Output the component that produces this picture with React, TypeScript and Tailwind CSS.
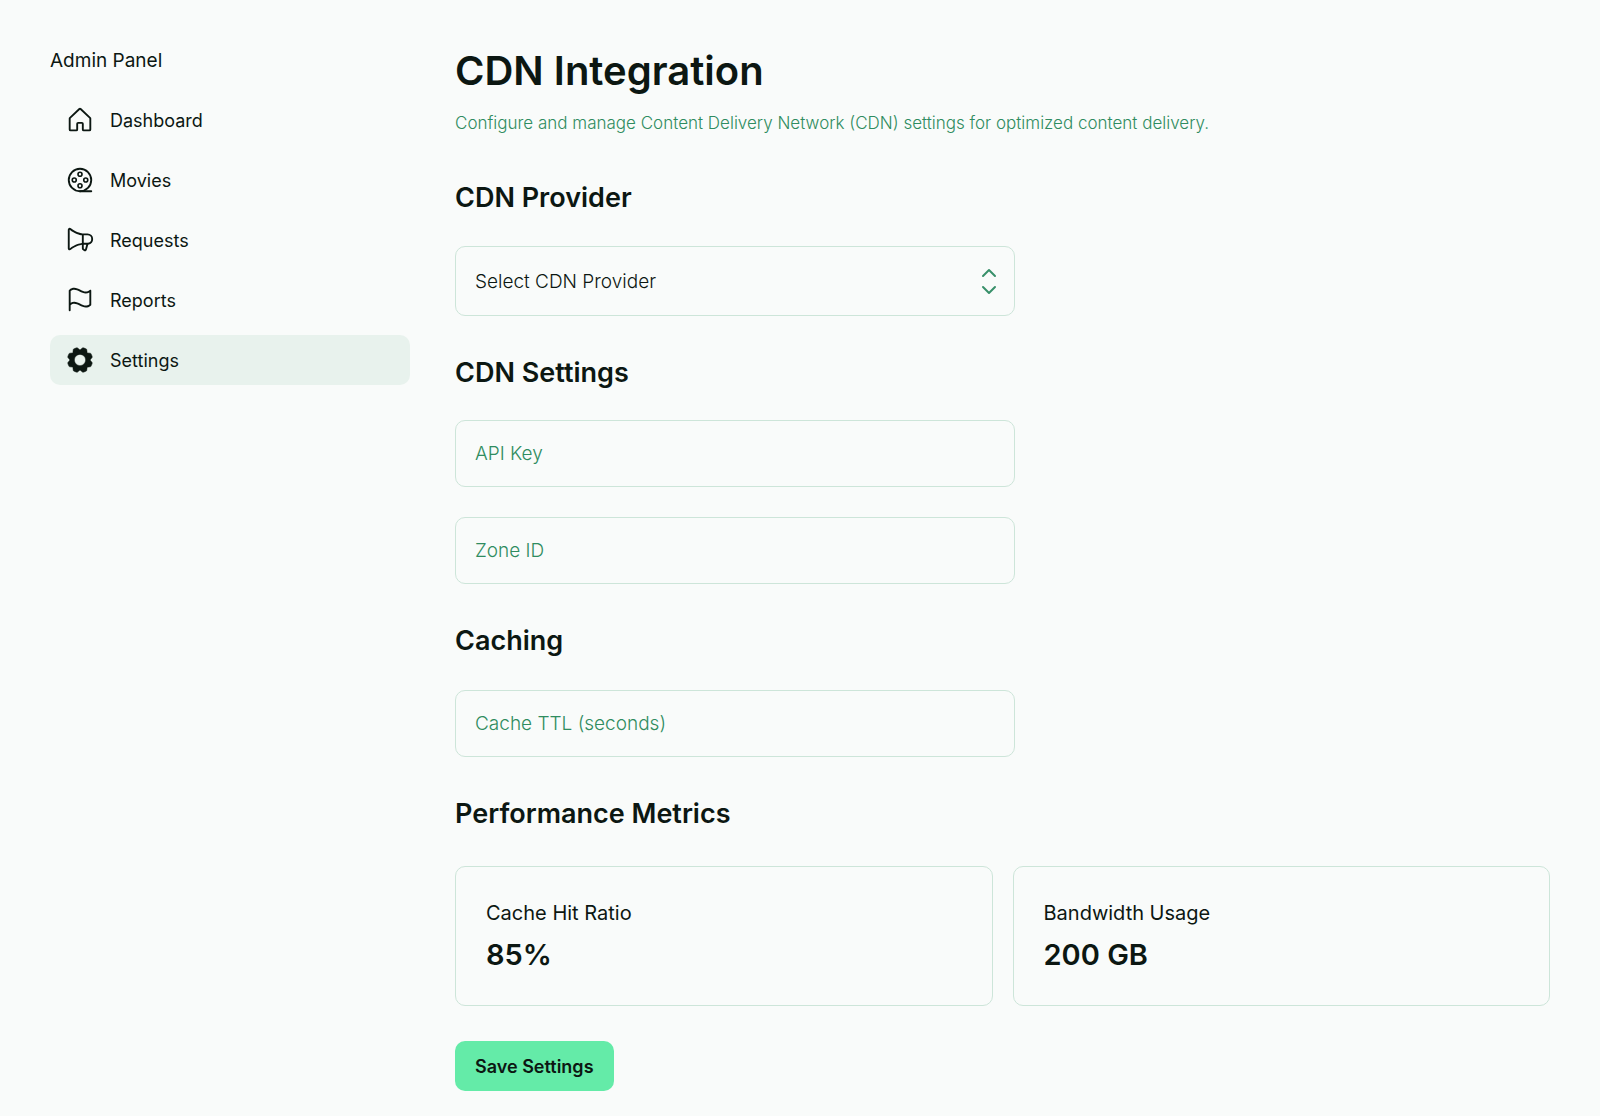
import type { ReactNode } from "react";

const HouseIcon = () => (
  <path d="M218.83,103.77l-80-75.48a1.14,1.14,0,0,1-.11-.11,16,16,0,0,0-21.53,0l-.11.11L37.17,103.77A16,16,0,0,0,32,115.55V208a16,16,0,0,0,16,16H96a16,16,0,0,0,16-16V160h32v48a16,16,0,0,0,16,16h48a16,16,0,0,0,16-16V115.55A16,16,0,0,0,218.83,103.77ZM208,208H160V160a16,16,0,0,0-16-16H112a16,16,0,0,0-16,16v48H48V115.55l.11-.1L128,40l79.9,75.43.11.1Z" />
);

const ReelIcon = () => (
  <g fill="none" stroke="currentColor" strokeWidth="16" strokeLinecap="round">
    <circle cx="128" cy="128" r="96" />
    <path d="M128 224h96" />
    <g strokeWidth="14">
      <circle cx="128" cy="79" r="17" />
      <circle cx="128" cy="177" r="17" />
      <circle cx="79" cy="128" r="17" />
      <circle cx="177" cy="128" r="17" />
    </g>
  </g>
);

const MegaphoneIcon = () => (
  <path d="M240,120a48.05,48.05,0,0,0-48-48H152.2c-2.91-.17-53.62-3.74-101.92-44.24A16,16,0,0,0,24,40V200a16,16,0,0,0,26.28,12.25c37.77-31.68,77-40.76,93.71-43.3v31.72A16,16,0,0,0,151.12,214l11,7.33A16,16,0,0,0,186.5,212l11.77-44.36A48.07,48.07,0,0,0,240,120ZM40,199.93V40h0c42.81,35.91,86.63,45,104,47.24v65.48C126.65,155,82.84,164.07,40,199.93Zm131,8,0,.11-11-7.33V168h21.6ZM192,152H160V88h32a32,32,0,1,1,0,64Z" />
);

const FlagIcon = () => (
  <path d="M34.76,42A8,8,0,0,0,32,48V216a8,8,0,0,0,16,0V171.77c26.79-21.16,49.87-9.75,76.45,3.41,16.4,8.11,34.06,16.85,53,16.85,13.93,0,28.54-4.75,43.82-18a8,8,0,0,0,2.76-6V48A8,8,0,0,0,210.76,42c-28,24.23-51.72,12.49-79.21-1.12C103.07,26.76,70.78,10.79,34.76,42ZM208,164.25c-26.79,21.16-49.87,9.74-76.45-3.41-25-12.35-52.81-26.13-83.55-8.4V51.79c26.79-21.16,49.87-9.75,76.45,3.4,25,12.35,52.82,26.13,83.55,8.4Z" />
);

const GearIcon = () => (
  <path
    fillRule="evenodd"
    stroke="currentColor"
    strokeWidth="4"
    strokeLinejoin="round"
    d="M216,130.16q.06-2.16,0-4.32l14.92-18.64a8,8,0,0,0,1.48-7.06,107.6,107.6,0,0,0-10.88-26.25,8,8,0,0,0-6-3.93l-23.72-2.64q-1.48-1.56-3-3L186,40.54a8,8,0,0,0-3.94-6,107.29,107.29,0,0,0-26.25-10.86,8,8,0,0,0-7.06,1.48L130.16,40Q128,40,125.84,40L107.2,25.11a8,8,0,0,0-7.06-1.48A107.6,107.6,0,0,0,73.89,34.51a8,8,0,0,0-3.93,6L67.32,64.27q-1.56,1.49-3,3L40.54,70a8,8,0,0,0-6,3.94,107.71,107.71,0,0,0-10.87,26.25,8,8,0,0,0,1.49,7.06L40,125.84Q40,128,40,130.16L25.11,148.8a8,8,0,0,0-1.48,7.06,107.6,107.6,0,0,0,10.88,26.25,8,8,0,0,0,6,3.93l23.72,2.64q1.49,1.56,3,3L70,215.46a8,8,0,0,0,3.94,6,107.71,107.71,0,0,0,26.25,10.87,8,8,0,0,0,7.06-1.49L125.84,216q2.16.06,4.32,0l18.64,14.92a8,8,0,0,0,7.06,1.48,107.21,107.21,0,0,0,26.25-10.88,8,8,0,0,0,3.93-6l2.64-23.72q1.56-1.48,3-3L215.46,186a8,8,0,0,0,6-3.94,107.71,107.71,0,0,0,10.87-26.25,8,8,0,0,0-1.49-7.06ZM128,176a48,48,0,1,1,48-48A48,48,0,0,1,128,176Z"
  />
);

const navItems: { label: string; icon: () => ReactNode; active?: boolean }[] = [
  { label: "Dashboard", icon: HouseIcon },
  { label: "Movies", icon: ReelIcon },
  { label: "Requests", icon: MegaphoneIcon },
  { label: "Reports", icon: FlagIcon },
  { label: "Settings", icon: GearIcon, active: true },
];

const metrics = [
  { label: "Cache Hit Ratio", value: "85%" },
  { label: "Bandwidth Usage", value: "200 GB" },
];

function SectionTitle({ children }: { children: ReactNode }) {
  return <h2 className="text-[27px] leading-9 font-semibold">{children}</h2>;
}

function TextField({ label }: { label: string }) {
  return (
    <input
      type="text"
      aria-label={label}
      placeholder={label}
      className="block h-[67px] w-full max-w-[560px] rounded-[10px] border border-[#cde5d9] bg-transparent px-[19px] text-[19px] font-light outline-none placeholder:text-[#2f8c60] placeholder:opacity-100 focus:border-[#2f8c60]"
    />
  );
}

export default function App() {
  return (
    <div className="flex min-h-screen gap-[45px] bg-[#f9fbfa] px-[50px] pt-[45px] pb-6 font-['Inter',sans-serif] text-[#0c1712]">
      <aside className="w-[360px] shrink-0">
        <p className="text-[19px] leading-8">Admin Panel</p>
        <nav className="mt-[18px] flex flex-col gap-[10px]">
          {navItems.map(({ label, icon: Icon, active }) => (
            <a
              key={label}
              href="#"
              aria-current={active ? "page" : undefined}
              className={`flex h-[50px] items-center gap-[15px] rounded-[10px] px-[15px] text-[18px] ${active ? "bg-[#e8f2ed]" : ""}`}
            >
              <svg viewBox="0 0 256 256" fill="currentColor" className="size-[30px] shrink-0" aria-hidden="true">
                <Icon />
              </svg>
              <span>{label}</span>
            </a>
          ))}
        </nav>
      </aside>

      <main className="min-w-0 flex-1">
        <h1 className="text-[40px] leading-[52px] font-semibold">CDN Integration</h1>
        <p className="mt-3 text-[17px] leading-7 font-light text-[#2f8c60]">
          Configure and manage Content Delivery Network (CDN) settings for optimized content delivery.
        </p>

        <section className="mt-[43px]">
          <SectionTitle>CDN Provider</SectionTitle>
          <div className="relative mt-[30px] max-w-[560px]">
            <select
              aria-label="CDN Provider"
              className="block h-[70px] w-full appearance-none rounded-[10px] border border-[#cde5d9] bg-transparent px-[19px] pt-[2px] text-[19px] font-light outline-none focus:border-[#2f8c60]"
            >
              <option>Select CDN Provider</option>
            </select>
            <svg
              viewBox="0 0 30 30"
              className="pointer-events-none absolute inset-y-0 right-[11px] my-auto size-[30px]"
              fill="none"
              stroke="#38906a"
              strokeWidth="2"
              strokeLinecap="round"
              strokeLinejoin="round"
              aria-hidden="true"
            >
              <path d="M9 10 15 4l6 6M9 21l6 6 6-6" />
            </svg>
          </div>
        </section>

        <section className="mt-[39px]">
          <SectionTitle>CDN Settings</SectionTitle>
          <div className="mt-[29px] flex flex-col gap-[30px]">
            <TextField label="API Key" />
            <TextField label="Zone ID" />
          </div>
        </section>

        <section className="mt-[39px]">
          <SectionTitle>Caching</SectionTitle>
          <div className="mt-[31px]">
            <TextField label="Cache TTL (seconds)" />
          </div>
        </section>

        <section className="mt-[39px]">
          <SectionTitle>Performance Metrics</SectionTitle>
          <dl className="mt-[34px] grid grid-cols-2 gap-5">
            {metrics.map(({ label, value }) => (
              <div key={label} className="rounded-[10px] border border-[#cde5d9] px-[30px] py-[29px]">
                <dt className="text-[20px] leading-[34px]">{label}</dt>
                <dd className="mt-[6px] mb-[2px] text-[29px] leading-[38px] font-semibold">{value}</dd>
              </div>
            ))}
          </dl>
        </section>

        <button
          type="button"
          className="mt-[35px] h-[50px] rounded-[10px] bg-[#64eba8] px-5 text-[18px] font-semibold"
        >
          Save Settings
        </button>
      </main>
    </div>
  );
}
